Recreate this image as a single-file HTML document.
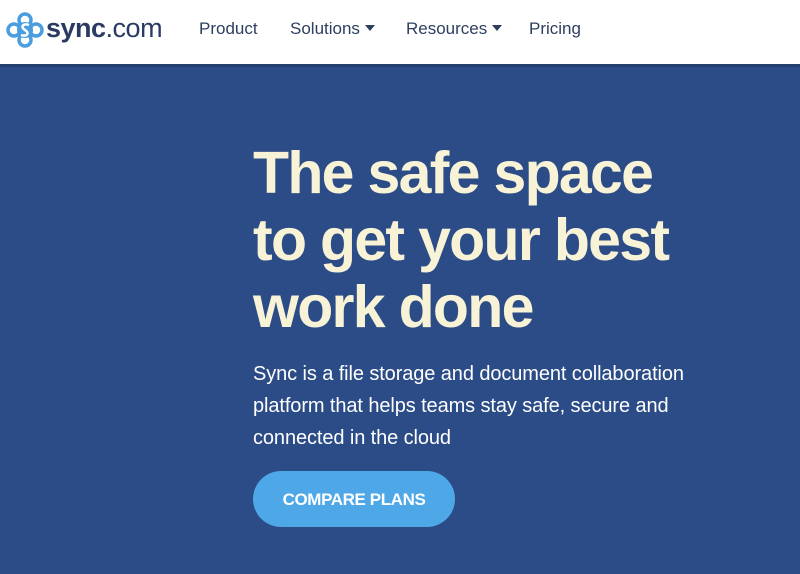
<!DOCTYPE html>
<html><head><style>
*{margin:0;padding:0;box-sizing:border-box}
body{width:800px;height:574px;overflow:hidden;background:#2b4c86;font-family:"Liberation Sans",sans-serif}
.hdr{position:absolute;left:0;top:0;width:800px;height:67px;background:#fff;border-bottom:3px solid #22406f}
.logo{position:absolute;left:6px;top:12px}
.brand{position:absolute;left:46px;top:13px;font-size:27px;color:#2a3a63;letter-spacing:-0.5px}
.brand b{font-weight:bold}
.nav{position:absolute;top:19px;font-size:17px;color:#2d3e5e}
.car{display:inline-block;width:0;height:0;border-left:5px solid transparent;border-right:5px solid transparent;border-top:6px solid #2d3e5e;margin-left:5px;vertical-align:3px}
h1{position:absolute;left:253px;top:140px;font-size:59px;line-height:67px;color:#f8f2d6;font-weight:bold;letter-spacing:-1.7px;white-space:nowrap}
p{position:absolute;left:253px;top:358px;font-size:20px;line-height:32px;color:#fff;letter-spacing:-0.1px;white-space:nowrap}
.btn{position:absolute;left:253px;top:471px;width:202px;height:56px;border-radius:28px;background:#4ea8e8;color:#fff;font-weight:bold;font-size:17px;text-align:center;line-height:58px;letter-spacing:-0.4px}
</style></head><body>
<div class="hdr">
<svg class="logo" width="38" height="36" viewBox="0 0 38 36">
<g fill="none" stroke="#4a9ee0" stroke-width="3.5">
<circle cx="19" cy="8" r="6"/><circle cx="19" cy="28" r="6"/><circle cx="8" cy="18" r="6"/><circle cx="30" cy="18" r="6"/>
</g>
<circle cx="19" cy="18" r="8" fill="#4a9ee0"/>
<path d="M23 13 C17 11 14 15 19 18 C24 21 21 25 15 23" stroke="#fff" stroke-width="2.5" fill="none"/>
</svg>
<div class="brand"><b>sync</b>.com</div>
<div class="nav" style="left:199px">Product</div>
<div class="nav" style="left:290px">Solutions<span class="car"></span></div>
<div class="nav" style="left:406px">Resources<span class="car"></span></div>
<div class="nav" style="left:529px">Pricing</div>
</div>
<h1>The safe space<br>to get your best<br>work done</h1>
<p>Sync is a file storage and document collaboration<br>platform that helps teams stay safe, secure and<br>connected in the cloud</p>
<div class="btn">COMPARE PLANS</div>
</body></html>
